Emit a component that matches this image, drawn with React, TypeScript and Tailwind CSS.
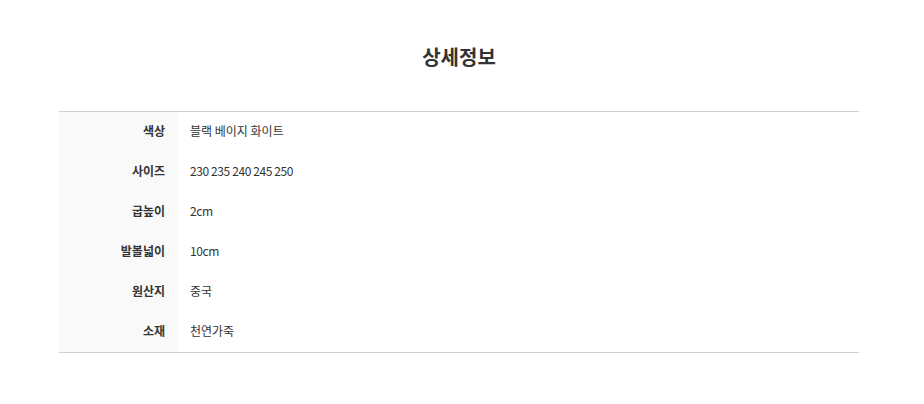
import React from "react";

const rows: [string, string, boolean][] = [
  ["색상", "블랙 베이지 화이트", false],
  ["사이즈", "230 235 240 245 250", true],
  ["굽높이", "2cm", true],
  ["발볼넓이", "10cm", true],
  ["원산지", "중국", false],
  ["소재", "천연가죽", false],
];

export default function App() {
  return (
    <div
      className="w-[924px] h-[404px] bg-white text-[#333]"
      style={{ fontFamily: '"Noto Sans CJK KR", "Noto Sans", sans-serif' }}
    >
      <div className="w-[800px] ml-[59px]">
        <div className="pt-[44px] flex justify-center">
          <h2 className="text-[20px] leading-[26px] font-bold text-[#333]">상세정보</h2>
        </div>
        <div className="mt-[41px] border-t border-b border-[#cfcfcf]">
          {rows.map(([k, v, num]) => (
            <div key={k} className="flex h-[40px]">
              <div className="w-[119px] bg-[#f9f9f9] flex items-center justify-end pr-[13px] pb-[2px] text-[12px] font-bold text-[#333]">
                {k}
              </div>
              <div
                className={
                  num
                    ? "flex items-center pl-[12px] pb-[2px] text-[12px] text-[#333] tracking-[-0.4px]"
                    : "flex items-center pl-[12px] pb-[2px] text-[12px] text-[#333]"
                }
              >
                {v}
              </div>
            </div>
          ))}
        </div>
      </div>
    </div>
  );
}
